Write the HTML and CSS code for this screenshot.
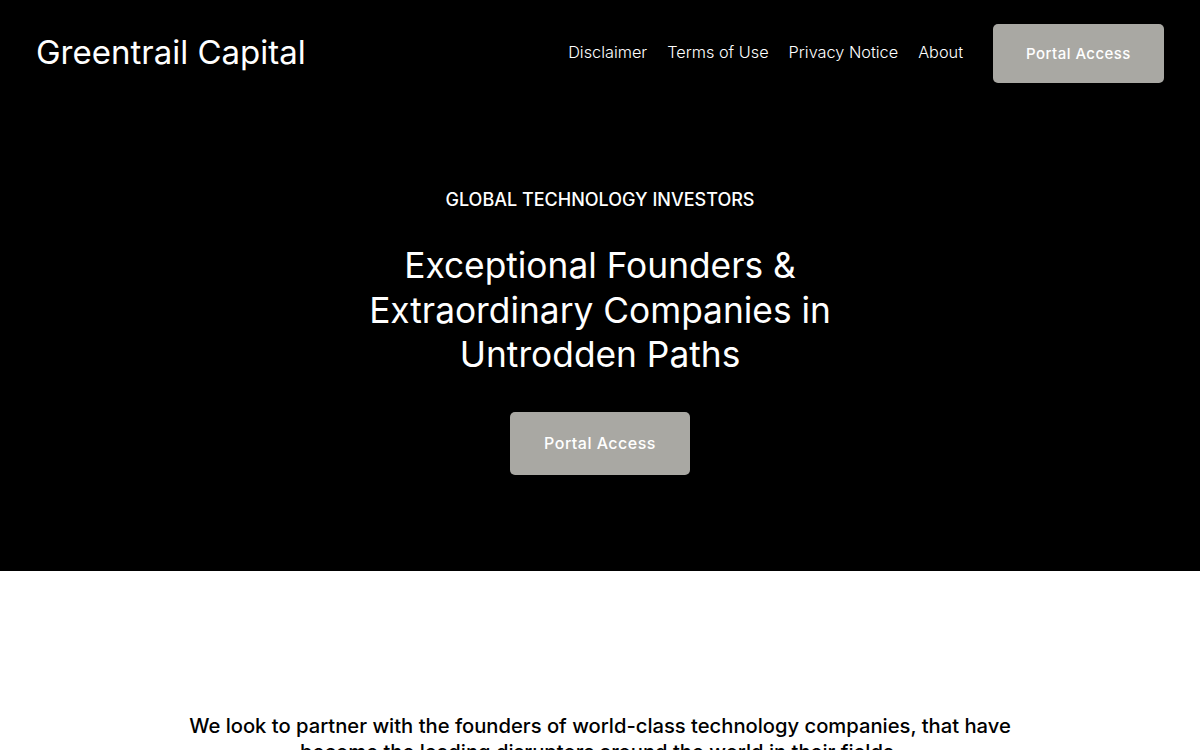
FILE: index.html
```html
<!DOCTYPE html>
<html lang="en">
<head>
<meta charset="utf-8">
<title>Greentrail Capital</title>
<link rel="stylesheet" href="styles.css">
</head>
<body>
<div class="hero-wrap">
  <header class="site-header">
    <a class="logo" href="#">Greentrail Capital</a>
    <div class="header-right">
      <nav class="nav">
        <a href="#">Disclaimer</a>
        <a href="#">Terms of Use</a>
        <a href="#">Privacy Notice</a>
        <a href="#">About</a>
      </nav>
      <a class="btn btn-header" href="#">Portal Access</a>
    </div>
  </header>
  <section class="hero">
    <p class="eyebrow">GLOBAL TECHNOLOGY INVESTORS</p>
    <h1 class="hero-title">Exceptional Founders &amp; Extraordinary Companies in Untrodden Paths</h1>
    <a class="btn btn-hero" href="#">Portal Access</a>
  </section>
</div>
<section class="intro">
  <p class="intro-text">We look to partner with the founders of world-class technology companies, that have become the leading disruptors around the world in their fields.</p>
</section>
</body>
</html>
```
FILE: styles.css
```css
* { box-sizing: border-box; }
html, body { margin: 0; padding: 0; }
body {
  font-family: "Inter", "DejaVu Sans", sans-serif;
  background: #fff;
  color: #000;
}
a { text-decoration: none; color: inherit; }

.hero-wrap {
  background: #000;
  color: #fff;
  height: 571px;
  display: flex;
  flex-direction: column;
}
.site-header {
  display: flex;
  align-items: center;
  justify-content: space-between;
  padding: 24px 36px 0 36px;
  height: 83px;
}
.logo {
  font-size: 33px;
  font-weight: 400;
  line-height: 40px;
  margin-top: -4px;
}
.header-right {
  display: flex;
  align-items: center;
  gap: 30px;
}
.nav {
  display: flex;
  gap: 20px;
  font-size: 16.3px;
  font-weight: 300;
  margin-top: -3px;
}
.btn {
  display: inline-flex;
  align-items: center;
  justify-content: center;
  background: #a9a8a3;
  color: #fff;
  font-weight: 500;
  border-radius: 5px;
  letter-spacing: 0.03em;
}
.btn-header {
  width: 171px;
  height: 59px;
  font-size: 15px;
}
.hero {
  display: flex;
  flex-direction: column;
  align-items: center;
  text-align: center;
  padding-top: 105px;
}
.eyebrow {
  margin: 0;
  font-size: 18px;
  font-weight: 500;
  line-height: 24px;
}
.hero-title {
  margin: 32px 0 0 0;
  width: 480px;
  font-size: 35.3px;
  font-weight: 400;
  line-height: 44.5px;
}
.btn-hero {
  margin-top: 34px;
  width: 180px;
  height: 63px;
  font-size: 16px;
}
.intro {
  display: flex;
  justify-content: center;
  padding-top: 142px;
}
.intro-text {
  margin: 0;
  width: 850px;
  text-align: center;
  font-size: 20.2px;
  font-weight: 500;
  line-height: 26px;
}
```
